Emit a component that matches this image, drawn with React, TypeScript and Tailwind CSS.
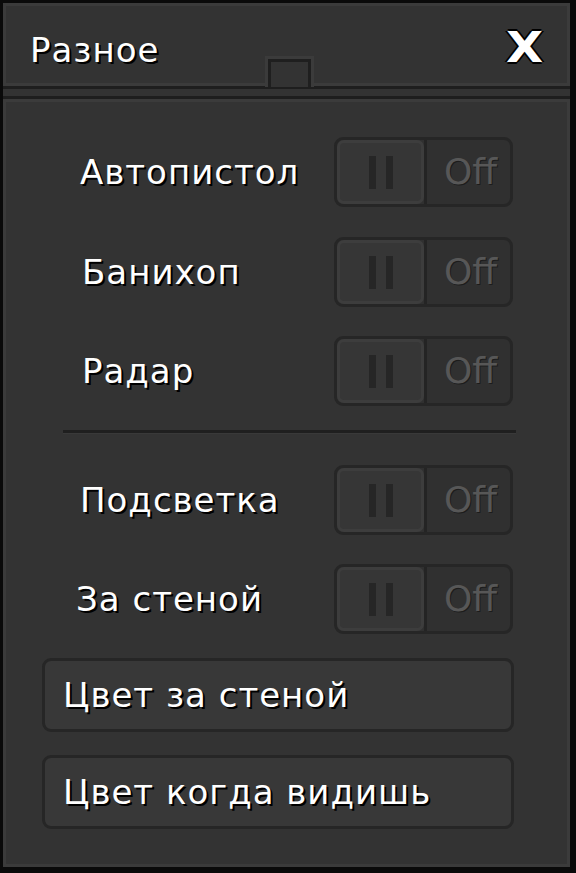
import React from "react";

const font = { fontFamily: '"DejaVu Sans", Verdana, sans-serif' };

function Toggle() {
  return (
    <div className="w-[179px] h-[70px] rounded-[9px] border-[3px] border-[#262626] bg-[#303030] flex shrink-0">
      <div className="w-[90px] h-full flex border-r-[3px] border-[#242424]">
        <div className="flex-1 rounded-[7px] border-[3px] border-[#3d3d3d] bg-[#363636] flex items-center justify-center gap-[10px]">
          <span className="w-[7px] h-[33px] bg-[#262626]" />
          <span className="w-[7px] h-[33px] bg-[#262626]" />
        </div>
      </div>
      <div className="flex-1 flex items-center justify-center pl-[4px] text-[36px] leading-none text-[#575757] [text-shadow:1px_1px_0_#1c1c1c]">
        Off
      </div>
    </div>
  );
}

function Row({ label, offset }: { label: string; offset: string }) {
  return (
    <div className="flex items-center h-[70px] pl-[74px]">
      <div className="w-[254px] flex items-center">
        <span
          className={`${offset} text-[34px] leading-none text-white tracking-[1px] [text-shadow:2px_2px_0_#000]`}
        >
          {label}
        </span>
      </div>
      <Toggle />
    </div>
  );
}

function ColorButton({ label }: { label: string }) {
  return (
    <button className="ml-[36px] w-[472px] h-[74px] rounded-[9px] border-[3px] border-[#262626] bg-[#383838] flex items-center pl-[18px] text-[34px] leading-none text-white tracking-[1px] [text-shadow:2px_2px_0_#000]">
      {label}
    </button>
  );
}

export default function App() {
  return (
    <div
      className="w-[576px] h-[873px] bg-[#0a0a0a] pt-[3px] pl-[3px] pr-[6px] pb-[6px]"
      style={font}
    >
      <div className="h-full flex flex-col bg-[#333333]">
        {/* Header */}
        <div className="relative h-[83px] shrink-0 border-[3px] border-[#3b3b3b] flex items-center justify-between pl-[24px] pr-[24px]">
          <span className="text-[34px] leading-none text-white tracking-[1px] [text-shadow:2px_2px_0_#000] mt-[10px]">
            Разное
          </span>
          <span className="text-[43px] leading-none font-bold text-white mt-[6px] scale-x-[1.12] origin-right [text-shadow:2px_0_0_#000,-2px_0_0_#000,0_2px_0_#000,0_-2px_0_#000]">
            X
          </span>
          <div className="absolute left-[259px] top-[50px] w-[49px] h-[31px] bg-[#3b3b3b] pt-[3px] px-[3px] z-10">
            <div className="w-full h-full bg-[#1f1f1f] pt-[3px] px-[3px]">
              <div className="w-full h-full bg-[#333333]" />
            </div>
          </div>
        </div>
        <div className="h-[3px] bg-[#1e1e1e] shrink-0" />
        <div className="h-[7px] shrink-0" />
        <div className="h-[3px] bg-[#1e1e1e] shrink-0" />

        {/* Content */}
        <div className="flex-1 border-[3px] border-[#3b3b3b] flex flex-col pt-[35px]">
          <Row label="Автопистол" offset="" />
          <div className="h-[30px]" />
          <Row label="Банихоп" offset="ml-[2px]" />
          <div className="h-[29px]" />
          <Row label="Радар" offset="ml-[2px]" />
          <div className="h-[24px]" />
          <div className="ml-[57px] w-[453px] h-[4px] border-t-[3px] border-[#1f1f1f] border-b border-b-[#393939]" />
          <div className="h-[31px]" />
          <Row label="Подсветка" offset="" />
          <div className="h-[29px]" />
          <Row label="За стеной" offset="-ml-[4px]" />
          <div className="h-[24px]" />
          <ColorButton label="Цвет за стеной" />
          <div className="h-[23px]" />
          <ColorButton label="Цвет когда видишь" />
        </div>
      </div>
    </div>
  );
}
